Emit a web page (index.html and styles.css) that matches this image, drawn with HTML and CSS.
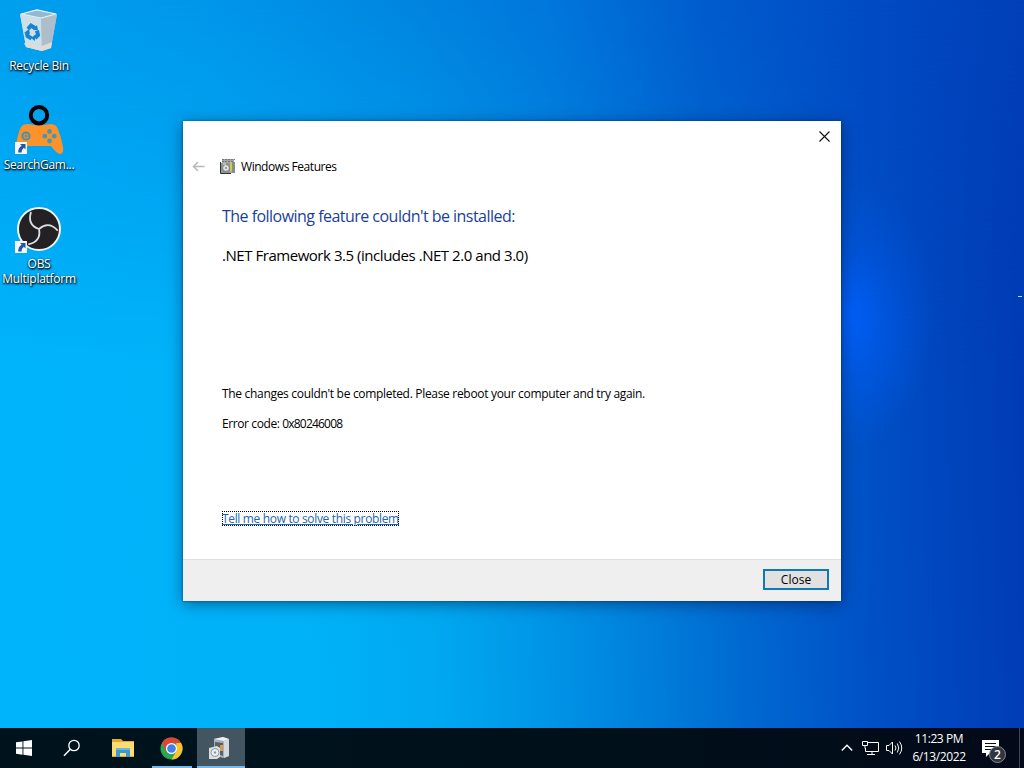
FILE: index.html
```html
<!DOCTYPE html>
<html lang="en">
<head>
    <meta charset="UTF-8">
    <meta name="viewport" content="width=device-width, initial-scale=1.0">
    <title>Windows Features</title>
    <link rel="stylesheet" href="styles.css">
</head>
<body>
    <main class="desktop">
        <div class="shortcuts">
            <div class="shortcut">
                <svg class="shortcut-icon" width="50" height="50" viewBox="1 0 50 50">
                    <path d="M7 6 24 1 44 6 38 40 29 43 13 39Z" fill="#a9d2e8"/>
                    <path d="M7 6 28 11 29 43 13 39Z" fill="#cddfeb"/>
                    <path d="M28 11 44 6 38 39 29 43Z" fill="#aebdca"/>
                    <path d="M11 35 29 38 39 34 38 40 29 43 13 39Z" fill="#dedcd8"/>
                    <path d="M8 6 24 2 43 6 28 10Z" fill="#92b9cf" stroke="#e4f1f8" stroke-width="1.2"/>
                    <g fill="none" stroke="#1683d1" stroke-width="4">
                        <path d="M15 21 18 17.500 22 20"/>
                        <path d="M24 22.500 25 27 22 30"/>
                        <path d="M18.500 30.500 14.500 28 13.800 25"/>
                    </g>
                    <path d="M20 22 25 22 24 17ZM22 27v6l-4-3ZM11 25l5-4 1 5Z" fill="#1683d1"/>
                </svg>
                <span>Recycle Bin</span>
            </div>
            <div class="shortcut">
                <svg class="shortcut-icon" width="50" height="50" viewBox="1 1 50 50">
                    <path d="M8 21Q10 18 15 18L21 19H31L37 18Q42 18 44 21Q48 30 50 41Q51 48 47 48Q43 47 38 40H15Q10 46 6 48Q2 48 3 41Q4 29 8 21Z" fill="#fb922c"/>
                    <circle cx="26" cy="9.200" r="8.200" fill="none" stroke="#000" stroke-width="4"/>
                    <circle cx="13" cy="30" r="3.600" fill="none" stroke="#4d91a1" stroke-width="2"/>
                    <path d="M13 27.500v5M10.500 30h5" stroke="#4d91a1"/>
                    <g fill="#4798ae"><circle cx="36.500" cy="25.500" r="2.400"/><circle cx="36.500" cy="35" r="2.400"/><circle cx="31.800" cy="30.200" r="2.400"/><circle cx="41.200" cy="30.200" r="2.400"/></g>
                    <path d="M2 36h12v12H2Z" fill="#f5f7fb"/>
                    <path d="M7 38h5.500V43.500L10.800 41.800Q8.500 43.500 8.600 46.500H5.200Q5 42 8.700 39.700Z" fill="#2156aa"/>
                </svg>
                <span>SearchGam...</span>
            </div>
            <div class="shortcut">
                <svg class="shortcut-icon" width="50" height="50" viewBox="1 1 50 50">
                    <circle cx="26" cy="24" r="21" fill="#242124" stroke="#eef3f6" stroke-width="2"/>
                    <g fill="none" stroke="#dce0e2" stroke-width="1.800">
                        <path d="M26 24Q14 20 18 7"/>
                        <path d="M26 24Q14 20 18 7" transform="rotate(120 26 24)"/>
                        <path d="M26 24Q14 20 18 7" transform="rotate(240 26 24)"/>
                    </g>
                    <path d="M2 36h12v12H2Z" fill="#f5f7fb"/>
                    <path d="M7 38h5.500V43.500L10.800 41.800Q8.500 43.500 8.600 46.500H5.200Q5 42 8.700 39.700Z" fill="#2156aa"/>
                </svg>
                <span>OBS<br>Multiplatform</span>
            </div>
        </div>

        <section class="dialog">
            <header class="titlebar">
                <svg width="11" height="11" viewBox="0 0 11 11"><path d="M.5.5l10 10M10.500.5l-10 10" stroke="#111" stroke-width="1.100"/></svg>
            </header>
            <div class="dialog-head">
                <svg class="back" width="13" height="11" viewBox="0 0 13 11"><path d="M6 1 1.500 5.500 6 10M1.500 5.500H12.500" fill="none" stroke="#b9b9b9" stroke-width="1.500"/></svg>
                <svg class="feature-icon" width="16" height="16" viewBox="0 0 16 16">
                    <path d="M2 1h12v14H2Z" fill="#a3a7a8"/>
                    <path d="M2 1.500h13M2 3.500h12" stroke="#777" stroke-dasharray="2 1"/>
                    <path d="M10 4h2v9h-2Z" fill="#d9c747"/>
                    <path d="M12 4h3v11h-3Z" fill="#858d94"/>
                    <path d="M1 5h9v10H1Z" fill="#8f9695"/>
                    <path d="M.5 4v11.500H11" fill="none" stroke="#303030"/>
                    <circle cx="6" cy="10" r="3.500" fill="#dce2df" stroke="#777d7c"/>
                    <circle cx="6" cy="10" r="1" fill="#888"/>
                    <path d="M3 6h3" stroke="#eee"/>
                </svg>
                <span>Windows Features</span>
            </div>
            <div class="dialog-body">
                <h1>The following feature couldn't be installed:</h1>
                <p class="feature">.NET Framework 3.5 (includes .NET 2.0 and 3.0)</p>
                <p class="message">The changes couldn't be completed. Please reboot your computer and try again.</p>
                <p class="code">Error code: <span>0x80246008</span></p>
                <a class="help" href="#">Tell me how to solve this problem</a>
            </div>
            <footer class="dialog-footer">
                <button class="close-btn" type="button">Close</button>
            </footer>
        </section>
        <i class="edge-mark"></i>
    </main>

    <nav class="taskbar">
        <div class="task">
            <svg width="16" height="16" viewBox="0 0 16 16"><path d="M0 2.300 6.500 1.400V7.600H0ZM7.400 1.200 16 0V7.600H7.400ZM0 8.500H6.500V14.700L0 13.800ZM7.400 8.500H16V16L7.400 14.800Z" fill="#fff"/></svg>
        </div>
        <div class="task">
            <svg width="18" height="18" viewBox="0 0 18 18"><circle cx="11" cy="6.500" r="5.200" fill="none" stroke="#fff" stroke-width="1.300"/><path d="M7.300 10.300 1 16.800" stroke="#fff" stroke-width="1.500"/></svg>
        </div>
        <div class="task folder">
            <svg width="22" height="18" viewBox="0 0 22 18">
                <path d="M0 0h9l2 2h11v16H0Z" fill="#e6a92e"/>
                <path d="M0 3h22v14H0Z" fill="#ffdc70"/>
                <path d="M4 9h14v9h-4v-4H8v4H4Z" fill="#3c98cf"/>
                <path d="M4 9h14v2H4Z" fill="#68b9dc"/>
            </svg>
        </div>
        <div class="task chrome running">
            <svg width="23" height="23" viewBox="0 0 24 24">
                <circle cx="12" cy="12" r="11.500" fill="#2da652"/>
                <path d="M2.040 6.250A11.500 11.500 0 0 1 21.960 6.250H12L7 15Z" fill="#e34335"/>
                <path d="M21.960 6.250A11.500 11.500 0 0 1 12 23.500L17 15V6.250Z" fill="#fac42d"/>
                <circle cx="12" cy="12" r="5.800" fill="#fff"/>
                <circle cx="12" cy="12" r="4.500" fill="#4381e6"/>
            </svg>
        </div>
        <div class="task active">
            <svg width="22" height="24" viewBox="0 0 22 24">
                <path d="M5 3 14 1 20 3V20L14 22 5 19Z" fill="#a8b1b7"/>
                <path d="M5 3 14 1 20 3 15 5Z" fill="#edf0f2"/>
                <path d="M15 5 20 3V20L15 22Z" fill="#d3dade"/>
                <path d="M6 6 14 7V20L6 17Z" fill="#596168"/>
                <path d="M11 9h3v6h-3Z" fill="#d69853"/>
                <path d="M0 12 8 10 11 12V21L8 23H0Z" fill="#dbe0e2"/>
                <circle cx="6" cy="16.500" r="4" fill="#eef1f2" stroke="#8c969c"/>
                <circle cx="6" cy="16.500" r="1.200" fill="#8d999f"/>
            </svg>
        </div>
        <div class="tray">
            <svg class="chevron" width="12" height="8" viewBox="0 0 12 8"><path d="M.8 6.500 6 1.300 11.200 6.500" fill="none" stroke="#fff" stroke-width="1.400"/></svg>
            <svg class="network" width="17" height="14" viewBox="0 0 17 14"><path d="M5.500 1.500H16.500V10.500H3.500V7M10 10.500V13.500M5 13.500H13M.5.500H5.500V4.500H.5ZM3 4.500V7.500" fill="none" stroke="#fff"/></svg>
            <svg class="volume" width="17" height="14" viewBox="0 0 17 14"><path d="M.5 4.500H3L6.500 1V13L3 9.500H.5ZM9 4.500Q11 7 9 9.500M11.300 2.500Q14.300 7 11.300 11.500M13.500.6Q18 7 13.500 13.400" fill="none" stroke="#fff"/></svg>
            <div class="clock"><span>11:23 PM</span><span>6/13/2022</span></div>
            <div class="notice">
                <svg width="18" height="17" viewBox="0 0 18 17"><path d="M0 0h17v13H8l-4 4v-4H0Z" fill="#fff"/><path d="M3 3.500h11M3 6.500h11M3 9.500h8" stroke="#09101b"/></svg>
                <b class="badge">2</b>
            </div>
        </div>
    </nav>
</body>
</html>
```
FILE: styles.css
```css
* {
    box-sizing: border-box;
}
body {
    margin: 0;
    width: 1024px;
    height: 768px;
    overflow: hidden;
    display: flex;
    flex-direction: column;
    font-family: 'Open Sans', 'Noto Sans', sans-serif;
    font-size: 12px;
    color: #000;
}
.desktop {
    position: relative;
    height: 728px;
    background: linear-gradient(95deg, #009fee 0%, #0096ea 20%, #0085e1 38%, #0076db 51%, #005ccd 65%, #004bc4 80%, #003bb3 100%);
}
/* brighter lower half of the wallpaper */
.desktop::before {
    content: "";
    position: absolute;
    inset: 0;
    background:
        radial-gradient(ellipse 85px 135px at 850px 312px, rgba(0, 98, 255, 1) 0%, rgba(0, 94, 245, 0.5) 45%, rgba(0, 85, 225, 0) 100%),
        linear-gradient(88deg, #00b4fb 0%, #00b2f8 30%, #00a8f0 42%, #0095e7 52%, #0081dc 61%, #0067d0 72%, #004fc5 84%, #0039b3 100%);
    -webkit-mask-image: linear-gradient(180deg, transparent 0%, #000 50%);
    mask-image: linear-gradient(180deg, transparent 0%, #000 50%);
}
.shortcuts {
    position: relative;
    width: 78px;
    padding-top: 8px;
    display: flex;
    flex-direction: column;
}
.shortcut {
    height: 99px;
    display: flex;
    flex-direction: column;
    align-items: center;
    color: #fff;
    line-height: 15px;
    text-align: center;
    letter-spacing: -0.27px;
    text-shadow: 0 1px 2px #000, 1px 1px 2px #000;
}
.shortcut-icon {
    flex: none;
    overflow: visible;
}
.dialog {
    position: absolute;
    left: 183px;
    top: 121px;
    width: 658px;
    height: 480px;
    display: flex;
    flex-direction: column;
    background: #fff;
    box-shadow: 0 3px 14px rgba(0, 20, 60, 0.5), 0 0 2px rgba(0, 20, 60, 0.5);
}
.titlebar {
    height: 29px;
    padding: 10px 11px 0 0;
    display: flex;
    justify-content: flex-end;
}
.dialog-head {
    height: 32px;
    padding-left: 9px;
    display: flex;
    align-items: center;
    letter-spacing: -0.45px;
}
.back {
    margin-right: 15px;
}
.feature-icon {
    margin-right: 5px;
}
.dialog-body {
    flex: 1;
    padding: 22px 39px 0;
    display: flex;
    flex-direction: column;
    align-items: flex-start;
}
.dialog-body h1 {
    margin: 0;
    font-size: 16px;
    font-weight: 400;
    line-height: 24px;
    letter-spacing: -0.53px;
    color: #1a3f9a;
}
.dialog-body p {
    margin: 0;
    line-height: 18px;
    letter-spacing: -0.31px;
}
.dialog-body .feature {
    margin-top: 15px;
    font-size: 15px;
    line-height: 24px;
    letter-spacing: -0.46px;
}
.dialog-body .message {
    margin-top: 118px;
}
.dialog-body .code {
    margin-top: 12px;
    letter-spacing: -0.4px;
}
.code span {
    letter-spacing: -0.8px;
}
.help {
    margin-top: 78px;
    height: 15px;
    line-height: 15px;
    letter-spacing: -0.34px;
    color: #1c68b0;
    outline: 1px dotted #000;
    outline-offset: -1px;
}
.dialog-footer {
    height: 42px;
    padding: 9px 12px 0 0;
    display: flex;
    justify-content: flex-end;
    background: #efefef;
    border-top: 1px solid #dfdfdf;
}
.close-btn {
    width: 66px;
    height: 21px;
    padding: 0;
    border: 2px solid #0f78b8;
    background: #e1e1e1;
    color: #000;
    font: inherit;
    line-height: 17px;
}
.edge-mark {
    position: absolute;
    left: 1018px;
    top: 296px;
    width: 4px;
    height: 1px;
    background: #a8e2e2;
}
.taskbar {
    height: 40px;
    display: flex;
    background: linear-gradient(90deg, #00131d, #00101b 60%, #030918);
    color: #fff;
}
.task {
    width: 48px;
    display: flex;
    align-items: center;
    justify-content: center;
}
.folder {
    width: 52px;
}
.folder svg {
    margin-left: 2px;
}
.chrome {
    width: 40px;
    margin: 0 5px 0 4px;
}
.chrome svg {
    margin-right: 1px;
}
.running,
.active {
    border-bottom: 2px solid #76b9ed;
    padding-top: 2px;
}
.active {
    background: #435560;
}
.active svg {
    margin-right: 3px;
}
.tray {
    margin-left: auto;
    display: flex;
    align-items: center;
    padding-right: 7px;
    border-right: 1px solid #3d4753;
    margin-right: 4px;
}
.network {
    margin-left: 9px;
}
.volume {
    margin-left: 7px;
}
.clock {
    width: 70px;
    padding-left: 2px;
    display: flex;
    flex-direction: column;
    align-items: center;
    line-height: 18px;
    letter-spacing: -0.4px;
}
.notice {
    position: relative;
    width: 39px;
    height: 17px;
    padding-left: 9px;
}
.badge {
    position: absolute;
    left: 16px;
    top: 6px;
    width: 17px;
    height: 17px;
    border: 1px solid #858a91;
    border-radius: 50%;
    background: #30363e;
    font-size: 12px;
    font-weight: 600;
    line-height: 15px;
    text-align: center;
}
```
